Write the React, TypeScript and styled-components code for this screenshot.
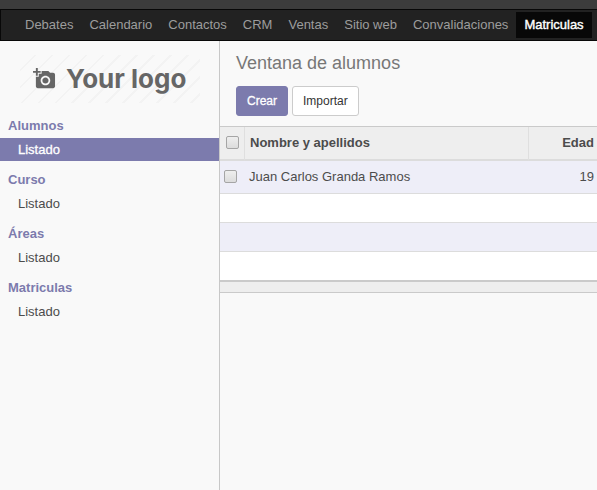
import React from "react";
import styled, { createGlobalStyle } from "styled-components";

const GlobalStyle = createGlobalStyle`
  *, *::before, *::after { box-sizing: border-box; }
  body {
    margin: 0;
    background: #f9f9f9;
    color: #4c4c4c;
    font: 13px/18px "Liberation Sans", Arial, sans-serif;
  }
`;

const Page = styled.div`
  display: flex;
  flex-direction: column;
  min-height: 100vh;
  overflow-x: hidden;
`;

const TopStrip = styled.div`
  height: 9px;
  background: #3c3c3c;
`;

const NavBar = styled.nav`
  display: flex;
  align-items: center;
  height: 32px;
  padding: 0 4px 0 16px;
  background: #222;
  border: 1px solid #080808;
  border-right: 0;
`;

const NavLink = styled.a<{ $active?: boolean }>`
  flex: none;
  padding: 0 8px;
  line-height: 26px;
  white-space: nowrap;
  text-decoration: none;
  color: ${(p) => (p.$active ? "#fff" : "#9d9d9d")};
  background: ${(p) => (p.$active ? "#080808" : "transparent")};
  -webkit-text-stroke: ${(p) => (p.$active ? "0.4px #fff" : "0")};
`;

const Body = styled.div`
  display: flex;
  flex: 1;
`;

const Sidebar = styled.aside`
  flex: none;
  width: 220px;
  padding-top: 14px;
  border-right: 1px solid #c8c8c8;
`;

const Logo = styled.a`
  display: flex;
  align-items: center;
  gap: 10px;
  height: 48px;
  margin: 0 19px 8px 20px;
  padding-left: 13px;
  color: #666;
  text-decoration: none;
  background: repeating-linear-gradient(
    135deg,
    #f9f9f9 0 10px,
    #f3f3f3 10px 12px
  );
`;

const LogoText = styled.span`
  font: 700 26px/48px Inter, sans-serif;
  white-space: nowrap;
`;

const MenuTitle = styled.h2`
  margin: 0;
  padding: 6px 8px 3px;
  font-size: 13px;
  line-height: 18px;
  color: #7c7bad;
`;

const MenuList = styled.ul`
  margin: 0 0 4px;
  padding: 0;
  list-style: none;
`;

const MenuLink = styled.a<{ $active?: boolean }>`
  display: block;
  padding-left: 18px;
  line-height: 23px;
  text-decoration: none;
  color: ${(p) => (p.$active ? "#fff" : "#4c4c4c")};
  background: ${(p) => (p.$active ? "#7c7bad" : "transparent")};
  -webkit-text-stroke: ${(p) => (p.$active ? "0.3px #fff" : "0")};
`;

const Content = styled.main`
  flex: 1;
  min-width: 0;
`;

const ControlPanel = styled.header`
  padding: 10px 16px;
`;

const Title = styled.h1`
  margin: 0 0 11px;
  font-size: 18px;
  font-weight: 400;
  line-height: 24px;
  color: #777;
`;

const Actions = styled.div`
  display: flex;
  gap: 4px;
`;

const Button = styled.button<{ $primary?: boolean }>`
  height: 30px;
  padding: 0 10px;
  font: 12px/18px "Liberation Sans", Arial, sans-serif;
  border: 1px solid ${(p) => (p.$primary ? "#7c7bad" : "#ccc")};
  border-radius: 3px;
  color: ${(p) => (p.$primary ? "#fff" : "#333")};
  background: ${(p) => (p.$primary ? "#7c7bad" : "#fff")};
  -webkit-text-stroke: ${(p) => (p.$primary ? "0.3px #fff" : "0")};
`;

const Table = styled.table`
  width: 100%;
  border-collapse: separate;
  border-spacing: 0;
  table-layout: fixed;
  border-top: 1px solid #cacaca;
`;

const HeadCell = styled.th<{ $width?: number; $end?: boolean }>`
  width: ${(p) => (p.$width ? `${p.$width}px` : "auto")};
  height: 34px;
  padding: 0 3px 0 ${(p) => (p.$width ? "6px" : "5px")};
  text-align: ${(p) => (p.$end ? "right" : "left")};
  background: #eee;
  border-bottom: 2px solid #dcdcdc;
  border-right: ${(p) => (p.$end ? "0" : "1px solid #dfdfdf")};
`;

const Row = styled.tr`
  height: 29px;
  background: #fff;
  &:nth-child(odd) { background: #eeeef8; }
  &:first-child { height: 33px; }
  &:last-child { height: 28px; }
  &:not(:last-child) td { border-bottom: 1px solid #dcdcdc; }
`;

const Cell = styled.td<{ $end?: boolean }>`
  padding: 0 3px 0 4px;
  text-align: ${(p) => (p.$end ? "right" : "left")};
`;

const FootCell = styled.td`
  height: 13px;
  padding: 0;
  background: #eee;
  border-top: 2px solid #cacaca;
  border-bottom: 1px solid #cacaca;
`;

const Checkbox = styled.input`
  display: block;
  appearance: none;
  width: 13px;
  height: 13px;
  margin: 0 0 2px;
  border: 1px solid #a5a5a5;
  border-radius: 2px;
  background: linear-gradient(#eee, #dcdcdc);
  &:checked { background: #7c7bad; }
`;

const CameraIcon = () => (
  <svg width="23" height="23" viewBox="0 1 24 24" fill="currentColor" aria-hidden="true">
    <path d="M3 4V1h2v3h3v2H5v3H3V6H0V4h3zm3 6V7h3V4h7l1.830 2H21c1.100 0 2 .9 2 2v12c0 1.100-.9 2-2 2H5c-1.100 0-2-.9-2-2V10h3zm7 9c2.760 0 5-2.240 5-5s-2.240-5-5-5-5 2.240-5 5 2.240 5 5 5zm-3.200-5c0 1.770 1.430 3.200 3.200 3.200s3.200-1.430 3.200-3.200-1.430-3.200-3.200-3.200-3.200 1.430-3.200 3.200z" />
  </svg>
);

const apps = [
  "Debates",
  "Calendario",
  "Contactos",
  "CRM",
  "Ventas",
  "Sitio web",
  "Convalidaciones",
  "Matriculas",
];
const currentApp = "Matriculas";

const sections = ["Alumnos", "Curso", "Áreas", "Matriculas"];
const currentSection = "Alumnos";

const students = [{ name: "Juan Carlos Granda Ramos", age: 19 }];
const emptyRows = [0, 1, 2];

export default function App() {
  return (
    <>
      <GlobalStyle />
      <Page>
        <TopStrip />
        <NavBar>
          {apps.map((app) => (
            <NavLink key={app} href="#" $active={app === currentApp}>
              {app}
            </NavLink>
          ))}
        </NavBar>
        <Body>
          <Sidebar>
            <Logo href="#">
              <CameraIcon />
              <LogoText>Your logo</LogoText>
            </Logo>
            {sections.map((section) => (
              <section key={section}>
                <MenuTitle>{section}</MenuTitle>
                <MenuList>
                  <li>
                    <MenuLink href="#" $active={section === currentSection}>
                      Listado
                    </MenuLink>
                  </li>
                </MenuList>
              </section>
            ))}
          </Sidebar>
          <Content>
            <ControlPanel>
              <Title>Ventana de alumnos</Title>
              <Actions>
                <Button type="button" $primary>
                  Crear
                </Button>
                <Button type="button">Importar</Button>
              </Actions>
            </ControlPanel>
            <Table>
              <thead>
                <tr>
                  <HeadCell $width={25}>
                    <Checkbox type="checkbox" aria-label="Seleccionar todo" />
                  </HeadCell>
                  <HeadCell>Nombre y apellidos</HeadCell>
                  <HeadCell $width={68} $end>
                    Edad
                  </HeadCell>
                </tr>
              </thead>
              <tbody>
                {students.map((s) => (
                  <Row key={s.name}>
                    <Cell>
                      <Checkbox type="checkbox" aria-label={s.name} />
                    </Cell>
                    <Cell>{s.name}</Cell>
                    <Cell $end>{s.age}</Cell>
                  </Row>
                ))}
                {emptyRows.map((n) => (
                  <Row key={n}>
                    <Cell colSpan={3} />
                  </Row>
                ))}
              </tbody>
              <tfoot>
                <tr>
                  <FootCell colSpan={3} />
                </tr>
              </tfoot>
            </Table>
          </Content>
        </Body>
      </Page>
    </>
  );
}
